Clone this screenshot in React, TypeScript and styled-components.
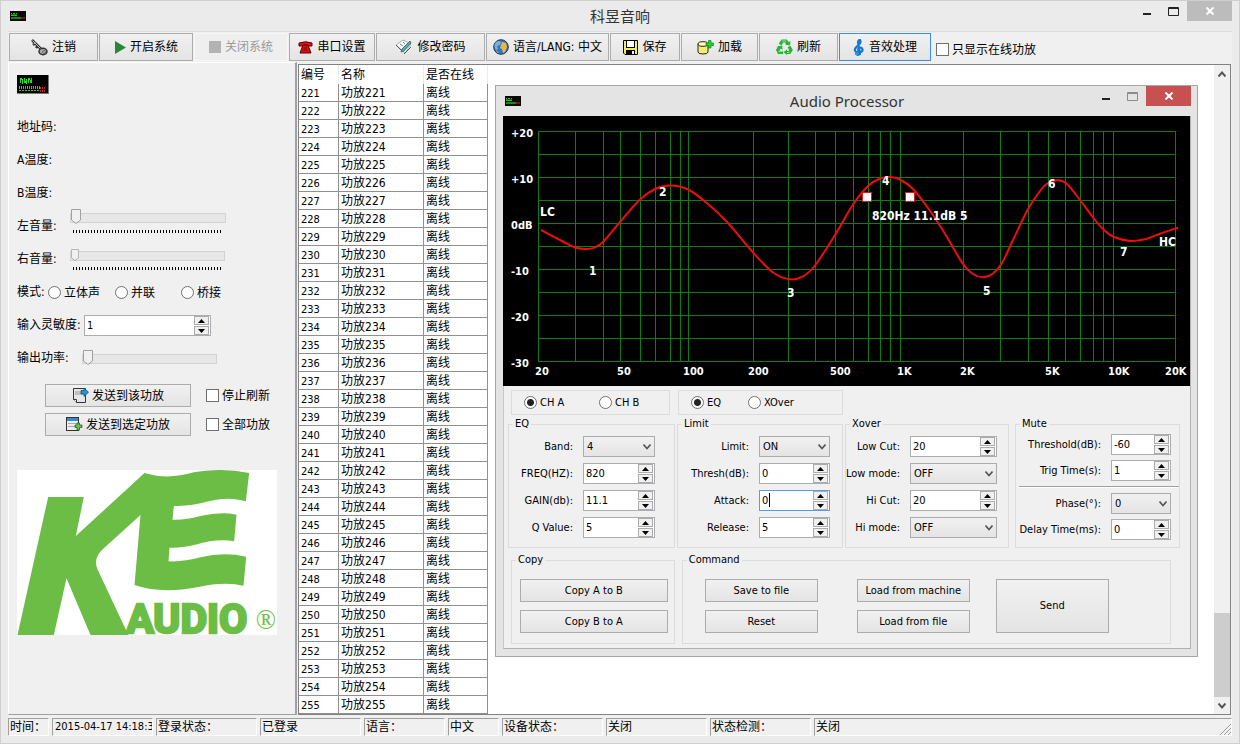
import React from 'react';
import styled, { createGlobalStyle, css } from 'styled-components';

const GlobalStyle = createGlobalStyle`
  * { box-sizing: border-box; }
  body { margin: 0; background: #ebebeb; }
  body, button, input, select, table {
    font-family: 'DejaVu Sans Condensed', 'Noto Sans CJK SC', sans-serif;
    font-size: 11px;
    color: #000;
  }
`;

/* ---------- shared controls ---------- */

const face = css`
  background: linear-gradient(#f1f1f1, #e4e4e4);
  border: 1px solid #acacac;
  border-radius: 0;
  padding: 0;
`;

const PushButton = styled.button<{ $tall?: boolean }>`
  ${face}
  height: ${p => (p.$tall ? 54 : 23)}px;
  display: flex;
  align-items: center;
  justify-content: center;
  gap: 3px;
  white-space: nowrap;
  line-height: 16px;
`;

const CheckLabel = styled.label`
  display: flex;
  align-items: center;
  gap: 3px;
  font-size: 12px;
  line-height: 16px;
  white-space: nowrap;
`;

const CheckBox = styled.input.attrs({ type: 'checkbox' })`
  appearance: none;
  margin: 0;
  width: 13px;
  height: 13px;
  border: 1px solid #707070;
  background: #fff;
`;

const RadioLabel = styled.label<{ $width?: number; $cjk?: boolean }>`
  display: flex;
  align-items: center;
  gap: 3px;
  width: ${p => (p.$width ? `${p.$width}px` : 'auto')};
  font-size: ${p => (p.$cjk ? 12 : 11)}px;
  line-height: 16px;
  white-space: nowrap;
`;

const RadioDot = styled.input.attrs({ type: 'radio' })`
  appearance: none;
  margin: 0;
  width: 13px;
  height: 13px;
  border: 1px solid #707070;
  border-radius: 50%;
  background: #fff;
  &:checked { background: radial-gradient(circle, #222 0 3px, #fff 4px); }
`;

const SpinBox = styled.div<{ $width: string; $active?: boolean }>`
  position: relative;
  display: flex;
  width: ${p => p.$width};
  height: 21px;
  border: 1px solid ${p => (p.$active ? '#569de5' : '#abadb3')};
  background: #fff;
`;

const SpinInput = styled.input`
  flex: 1;
  min-width: 0;
  border: 0;
  outline: 0;
  padding: 0 0 0 2px;
  background: transparent;
`;

const SpinArrows = styled.div`
  display: flex;
  flex-direction: column;
  justify-content: space-between;
  width: 15px;
  margin-right: 1px;
`;

const SpinArrow = styled.button`
  ${face}
  background: #f0f0f0;
  height: 9px;
  display: flex;
  align-items: center;
  justify-content: center;
`;

const Caret = styled.span`
  position: absolute;
  left: 9px;
  top: 2px;
  width: 1px;
  height: 14px;
  background: #000;
`;

const SelectBox = styled.div<{ $width: string }>`
  position: relative;
  width: ${p => p.$width};
  height: 21px;
  svg { position: absolute; right: 4px; top: 8px; pointer-events: none; }
`;

const SelectField = styled.select`
  ${face}
  appearance: none;
  display: block;
  width: 100%;
  height: 21px;
  padding: 0 2px 0 3px;
`;

function Spin({ id, value, width = '100%', active }: { id: string; value: string; width?: string; active?: boolean }) {
  return (
    <SpinBox $width={width} $active={active}>
      <SpinInput id={id} defaultValue={value} />
      {active && <Caret />}
      <SpinArrows>
        <SpinArrow aria-label="+"><svg width="7" height="4"><path d="M0 4L3.500 0L7 4z" /></svg></SpinArrow>
        <SpinArrow aria-label="-"><svg width="7" height="4"><path d="M0 0L3.500 4L7 0z" /></svg></SpinArrow>
      </SpinArrows>
    </SpinBox>
  );
}

function Select({ id, value, width = '100%' }: { id: string; value: string; width?: string }) {
  return (
    <SelectBox $width={width}>
      <SelectField id={id} defaultValue={value}><option>{value}</option></SelectField>
      <svg width="8" height="6"><path d="M0.500 0.500L4 4.500L7.500 0.500" fill="none" stroke="#555" strokeWidth="1.600" /></svg>
    </SelectBox>
  );
}

/* ---------- icons ---------- */

const AmpIcon = () => (
  <svg width="32" height="19" viewBox="0 0 32 19" shapeRendering="crispEdges">
    <rect width="32" height="19" fill="#777" />
    <rect width="31" height="18" fill="#000" />
    <path d="M3.500 3v5M5.500 4v5M7.500 3v5M9.500 4v5M11.500 3v5M14.500 3v5M13.500 5v3M4.500 3v2M8.500 6v2M12.500 3v2" stroke="#1fe01f" fill="none" />
    <path d="M2 12.500h21" stroke="#22d822" strokeWidth="3" strokeDasharray="1 1" />
    <path d="M2 15.500h21" stroke="#22d822" strokeDasharray="2 1" />
    <path d="M23 12.500h6M23 15.500h5" stroke="#d01a1a" strokeWidth="2" strokeDasharray="1 1" />
  </svg>
);

const AmpIconSmall = () => (
  <svg width="16" height="10" viewBox="0 0 16 10" shapeRendering="crispEdges">
    <rect width="16" height="10" fill="#0a0a0a" />
    <path d="M1 2.500h1M3 2.500h2M6 2.500h1M1 4.500h6" stroke="#2bbf2b" />
    <path d="M1 3.500h6" stroke="#145c14" />
    <path d="M1 7h10" stroke="#138a13" strokeWidth="2" />
    <path d="M11 7h4" stroke="#7a1010" strokeWidth="2" />
  </svg>
);

const KeyIcon = () => (
  <svg width="17" height="17" viewBox="0 0 17 17">
    <path d="M1 1l9 9M2 6l3-2.500M5 9l2.500-3" stroke="#333" strokeWidth="2.600" fill="none" />
    <path d="M1.500 1.500l9 9M2.500 5.200l2-1.500" stroke="#bbb" fill="none" />
    <ellipse cx="12" cy="12.500" rx="4" ry="3.200" fill="#aaa" stroke="#333" strokeWidth="1.500" />
    <circle cx="13" cy="13" r="1.300" fill="#fff" stroke="#333" strokeWidth=".8" />
  </svg>
);
const PlayIcon = () => <svg width="12" height="13"><path d="M1 0L12 6.500L1 13z" fill="#26893a" /></svg>;
const StopIcon = () => <svg width="12" height="12"><rect width="12" height="12" fill="#b3b3b3" /></svg>;
const PhoneIcon = () => (
  <svg width="15" height="13" viewBox="0 0 15 13">
    <path d="M1 5V2Q7.500-.5 14 2v3h-4V4H5v1z" fill="#e3101a" stroke="#5c0508" />
    <path d="M5 4h5l3 8H2z" fill="#d80c16" stroke="#5c0508" />
    <path d="M6 7h3M5.500 9h4" stroke="#7b0a0d" />
  </svg>
);
const EditIcon = () => (
  <svg width="18" height="16" viewBox="0 0 18 16">
    <path d="M1 6l7-5 8 4-6 9z" fill="#f5f8f8" stroke="#a9b0b2" />
    <path d="M1 6l6 6M9 15l7-7" stroke="#555" fill="none" />
    <path d="M15 2L7 10l-1 3 3-1 7-8z" fill="#58aaa2" stroke="#33615f" strokeWidth=".8" />
    <path d="M5 5l3 2M8 3l2 2" stroke="#888" />
  </svg>
);
const GlobeIcon = () => (
  <svg width="16" height="16" viewBox="0 0 16 16">
    <circle cx="8" cy="8" r="7.300" fill="#2d78c6" stroke="#263546" />
    <path d="M3 3q3-2 5 0l-1 3-3 1 1 3-2 1Q0 7 3 3z" fill="#7db0d8" />
    <path d="M9 3l4 1 1 4-2 5-2 1-1-4-2-1 1-3z" fill="#e8b843" />
    <path d="M3 11l3 3-2-.5z" fill="#e8b843" />
  </svg>
);
const SaveIcon = () => (
  <svg width="15" height="15" viewBox="0 0 15 15">
    <path d="M.5.5h14v14H2l-1.500-1.500z" fill="#f2ec5a" stroke="#000" />
    <rect x="3.500" y=".5" width="8" height="7" fill="#fff" stroke="#000" />
    <rect x="3" y="10" width="9" height="5" />
    <rect x="9" y="11" width="2" height="3" fill="#fff" />
  </svg>
);
const LoadIcon = () => (
  <svg width="17" height="15" viewBox="0 0 17 15">
    <path d="M1 4v8q0 2 5 2t5-2V4" fill="#f3ee72" stroke="#222" />
    <ellipse cx="6" cy="4" rx="5" ry="2.300" fill="#fffcc0" stroke="#222" />
    <path d="M9 3h2.500V.5h2.500V3h2.500v2.500H14V8h-2.500V5.500H9z" fill="#25cf2d" stroke="#11861a" strokeWidth=".7" />
  </svg>
);
const RecycleIcon = () => (
  <svg width="17" height="16" viewBox="0 0 17 16">
    <g fill="none" stroke="#27b535" strokeWidth="3.200">
      <path d="M4 5.500L6.500 2H10l2 3" />
      <path d="M13 7.500l2 3.500-1.500 2.500H10" />
      <path d="M7 13.500H3L1.800 11 4 7.500" />
    </g>
    <path d="M9 5.500l5 1 .5-4.500zM11 10.500v5.500l-3.500-2.700zM.5 8L6 6.500l.8 4z" fill="#27b535" />
    <path d="M6 2h4M2.500 12.500h4M11 13.500h2.500" stroke="#8eea90" />
  </svg>
);
const ClefIcon = () => (
  <svg width="12" height="17" viewBox="0 0 12 17">
    <path
      d="M7 15Q4.500 17 3 14.500M7 15L5 3Q5.500.8 7 1q1.200 2-.5 4L3 8.500Q.2 12 4 13q6 .8 5.500-2.500Q8.500 7.800 6 9q-1.800 1.700 0 2.500"
      fill="none" stroke="#1277cf" strokeWidth="2.200" strokeLinecap="round"
    />
    <circle cx="3.800" cy="14.500" r="1.800" fill="#1c9ae8" />
  </svg>
);
const SendIcon = () => (
  <svg width="17" height="17" viewBox="0 0 17 17">
    <path d="M1.500 1.500h12v14h-9l-3-3z" fill="#e6e6e6" stroke="#333" />
    <path d="M4 4v4M6 4v4M8 4v4M10 4v4" stroke="#999" />
    <path d="M1.500 12.500h3v3" fill="#fff" stroke="#333" />
    <path d="M9 3.500h3V1l4.500 4.200L12 9.500V7H9z" fill="#2196d3" stroke="#0e4c73" strokeWidth=".8" />
  </svg>
);
const SendSelectedIcon = () => (
  <svg width="17" height="15" viewBox="0 0 17 15">
    <rect x=".5" y=".5" width="12" height="13" fill="#eee" stroke="#333" />
    <rect x="1" y="1" width="11" height="3" fill="#2d8fd0" />
    <path d="M2 6.500h9M2 9.500h8" stroke="#aaa" />
    <path d="M9 8h2V6h2.500v2h2.500v2.500h-2.500V13H11v-2.500H9z" fill="#67c34f" stroke="#2d5c25" strokeWidth=".8" />
  </svg>
);

/* ---------- window frame ---------- */

const Shell = styled.div`
  min-height: 100vh;
  display: flex;
  flex-direction: column;
  background: #ebebeb;
  border: 1px solid #cfcfcf;
  padding: 0 7px 7px;
`;

const TitleBar = styled.header`
  display: grid;
  grid-template-columns: 1fr auto 1fr;
  height: 30px;
  line-height: 30px;
  font-family: 'Noto Sans', 'Noto Sans CJK SC', sans-serif;
  font-size: 15px;
  color: #333;
  > svg { align-self: center; margin-left: 2px; }
`;

const WindowButtons = styled.div`
  display: flex;
  justify-content: flex-end;
  align-items: flex-start;
`;

const WindowButton = styled.button<{ $close?: string }>`
  width: ${p => (p.$close ? 45 : 27)}px;
  height: 20px;
  padding: 0;
  border: 0;
  background: ${p => p.$close || 'transparent'};
  display: flex;
  align-items: center;
  justify-content: center;
`;

function Controls({ close, max }: { close: string; max: string }) {
  return (
    <WindowButtons>
      <WindowButton aria-label="Minimize"><svg width="10" height="10"><path d="M1 8h8" stroke="#222" strokeWidth="2" /></svg></WindowButton>
      <WindowButton aria-label="Maximize">
        <svg width="11" height="9"><path d="M.5 1.500h10M.5 .5h10v8H.5z" fill="none" stroke={max} /></svg>
      </WindowButton>
      <WindowButton aria-label="Close" $close={close}><svg width="8" height="8"><path d="M.5.5l7 7M7.500.5l-7 7" stroke="#fff" strokeWidth="2" /></svg></WindowButton>
    </WindowButtons>
  );
}

/* ---------- tool bar ---------- */

const Toolbar = styled.nav`
  display: flex;
  gap: 1px;
  height: 31px;
  padding: 1px 0 0 1px;
  background: #f0f0f0;
  border-top: 1px solid #dedede;
`;

const ToolButton = styled.button<{ $width: number; $flat?: boolean; $current?: boolean }>`
  ${face}
  width: ${p => p.$width}px;
  height: 28px;
  display: flex;
  align-items: center;
  justify-content: center;
  gap: 4px;
  font-size: 12px;
  line-height: 16px;
  white-space: nowrap;
  ${p => p.$flat && css`background: #efefef; border-color: #f6f6f6; color: #9a9a9a;`}
  ${p => p.$current && css`border-color: #3c8fe0;`}
`;

const ToolCheck = styled(CheckLabel)`
  margin: 4px 0 0 4px;
`;

const TOOLS = [
  { text: '注销', width: 89, icon: <KeyIcon /> },
  { text: '开启系统', width: 94, icon: <PlayIcon /> },
  { text: '关闭系统', width: 94, icon: <StopIcon />, flat: true },
  { text: '串口设置', width: 86, icon: <PhoneIcon /> },
  { text: '修改密码', width: 109, icon: <EditIcon /> },
  { text: '语言/LANG: 中文', width: 123, icon: <GlobeIcon /> },
  { text: '保存', width: 70, icon: <SaveIcon /> },
  { text: '加载', width: 77, icon: <LoadIcon /> },
  { text: '刷新', width: 79, icon: <RecycleIcon /> },
  { text: '音效处理', width: 92, icon: <ClefIcon />, current: true },
];

/* ---------- left panel ---------- */

const Main = styled.main`
  flex: 1;
  display: flex;
  background: #f0f0f0;
`;

const Side = styled.aside`
  flex: none;
  width: 289px;
  padding: 12px 0 0 8px;
  border: 1px solid #fff;
  border-right: 2px solid #a0a0a0;
  border-bottom-color: #a0a0a0;
  > svg { display: block; }
`;

const SideRows = styled.div`
  padding-top: 17px;
`;

const SideRow = styled.div<{ $top?: boolean }>`
  display: flex;
  align-items: ${p => (p.$top ? 'flex-start' : 'center')};
  height: 33px;
  font-size: 12px;
`;

const SideLabel = styled.label<{ $width?: number }>`
  min-width: ${p => p.$width || 0}px;
  line-height: 33px;
  white-space: nowrap;
`;

const SliderColumn = styled.div<{ $width: number; $gap: number }>`
  display: flex;
  flex-direction: column;
  gap: ${p => p.$gap}px;
  width: ${p => p.$width}px;
`;

const thumbImage = `url("data:image/svg+xml,${encodeURIComponent(
  '<svg xmlns="http://www.w3.org/2000/svg" viewBox="0 0 10 15" preserveAspectRatio="none"><path d="M.5.5h9v10.500L5 14.500.5 11z" fill="#f0f0f0" stroke="#a0a0a0"/></svg>',
)}")`;

const Slider = styled.input.attrs({ type: 'range' })<{ $small?: boolean }>`
  appearance: none;
  display: block;
  width: 100%;
  height: ${p => (p.$small ? 13 : 16)}px;
  margin: 0;
  background: transparent;
  &::-webkit-slider-runnable-track {
    height: 10px;
    border: 1px solid #d3d3d3;
    background: #e7e7e7;
  }
  &::-webkit-slider-thumb {
    appearance: none;
    width: ${p => (p.$small ? 8 : 10)}px;
    height: ${p => (p.$small ? 12 : 15)}px;
    margin-top: ${p => (p.$small ? -3 : -5)}px;
    background: ${thumbImage} 0 0 / 100% 100% no-repeat;
  }
`;

const Ticks = styled.div`
  height: 3px;
  margin: 0 3px;
  background: repeating-linear-gradient(90deg, #000 0 1px, transparent 1px 3px);
`;

const SideActions = styled.div`
  display: grid;
  grid-template-columns: 146px auto;
  gap: 6px 15px;
  padding: 9px 0 0 28px;
  ${PushButton} { font-size: 12px; }
`;

const LogoBox = styled.div`
  width: 260px;
  margin-top: 34px;
  background: #fff;
  svg { display: block; }
`;

const Logo = () => (
  <LogoBox>
    <svg width="260" height="165" viewBox="51 300 777 495" role="img" aria-label="KE Audio">
      <g fill="#6bbd45">
        <path d="M51 795L143 381H250L226 498L432 309C490 326 530 320 580 307Q660 292 746 309L736 394C690 380 650 386 600 400Q560 410 520 408L516 449Q560 450 600 438Q660 424 708 434L701 514Q650 504 590 523Q550 534 507 533L504 574Q550 576 600 562Q670 545 737 560L729 647Q670 634 590 652Q480 672 402 645L420 435L310 535Q275 565 292 600L368 762L384 795H270L198 625L160 795Z" />
        <text x="377" y="790" fontFamily="Roboto, 'Liberation Sans', sans-serif" fontWeight="700" fontSize="123" stroke="#6bbd45" strokeWidth="8">AUDIO</text>
        <text x="766" y="778" fontFamily="'Liberation Serif', serif" fontSize="80">®</text>
      </g>
    </svg>
  </LogoBox>
);

/* ---------- device list ---------- */

const ListPanel = styled.section`
  position: relative;
  flex: 1;
  display: flex;
  justify-content: space-between;
  align-items: stretch;
  margin: 2px 1px 0 1px;
  border: 1px solid #828282;
  background: #fff;
`;

const DeviceTable = styled.table`
  align-self: flex-start;
  border-collapse: separate;
  border-spacing: 0;
  table-layout: fixed;
  width: 189px;
  th, td {
    text-align: left;
    padding: 2px 0 0 2px;
    font-weight: 400;
    white-space: nowrap;
    overflow: hidden;
  }
  th {
    height: 19px;
    line-height: 17px;
    font-size: 12px;
    border-right: 1px solid #ececec;
  }
  td {
    height: 18px;
    line-height: 15px;
    border-right: 1px solid #909090;
    border-bottom: 1px solid #909090;
  }
  td + td { font-size: 12px; }
`;

const ScrollBar = styled.div`
  display: flex;
  flex-direction: column;
  width: 16px;
  background: #f0f0f0;
`;

const ScrollButton = styled.button`
  height: 17px;
  border: 0;
  padding: 0;
  background: #f0f0f0;
`;

const ScrollTrack = styled.div`
  flex: 1;
  display: flex;
  align-items: flex-end;
`;

const ScrollThumb = styled.div`
  width: 100%;
  height: 84px;
  background: #cdcdcd;
`;

const DEVICES = Array.from({ length: 35 }, (_, i) => 221 + i);

/* ---------- audio processor window ---------- */

const Dialog = styled.section`
  position: absolute;
  left: 196px;
  top: 20px;
  width: 703px;
  padding: 0 6px 7px 7px;
  background: #e4e4e4;
  border: 1px solid #a6a6a6;
`;

const DialogBody = styled.div`
  border: 1px solid #b0b0b0;
  border-top: 0;
  border-left-color: #c8c8c8;
  background: #f0f0f0;
`;

const Chart = styled.svg`
  display: block;
  margin-left: -1px;
  background: #000;
  text {
    font-family: 'DejaVu Sans Condensed', 'DejaVu Sans', sans-serif;
    font-size: 11px;
    font-weight: 700;
    fill: #fff;
  }
  .mark { font-size: 12px; }
`;

const ModeRow = styled.div`
  display: flex;
  gap: 8px;
  padding: 4px 0 0 7px;
`;

const ModeBox = styled.div<{ $width: number }>`
  display: flex;
  align-items: center;
  width: ${p => p.$width}px;
  height: 25px;
  padding-left: 12px;
  border: 1px solid #dcdcdc;
`;

const GroupRow = styled.div<{ $last?: boolean }>`
  display: flex;
  align-items: stretch;
  gap: ${p => (p.$last ? 7 : 2)}px;
  padding: ${p => (p.$last ? '4px 19px 4px 7px' : '1px 10px 0 4px')};
  > :last-child { margin-left: auto; }
`;

const Group = styled.fieldset<{ $width: number }>`
  width: ${p => p.$width}px;
  min-width: 0;
  margin: 0;
  padding: 0;
  border: 1px solid #dcdcdc;
  legend {
    margin-left: 4px;
    padding: 0 2px;
    line-height: 16px;
  }
`;

const Fields = styled.div<{ $labels: number; $control: number; $dense?: boolean }>`
  display: grid;
  grid-template-columns: ${p => p.$labels}px ${p => p.$control}px;
  justify-content: start;
  align-items: center;
  column-gap: 10px;
  row-gap: ${p => (p.$dense ? 5 : 6)}px;
  padding: ${p => (p.$dense ? '2px 0 7px' : '4px 0 9px')};
  > label { text-align: right; line-height: 16px; white-space: nowrap; }
  > hr {
    grid-column: 1 / -1;
    width: 160px;
    height: 2px;
    margin: 0 0 0 3px;
    border: 0;
    border-top: 1px solid #a0a0a0;
    border-bottom: 1px solid #fff;
  }
`;

const CopyButtons = styled.div`
  display: grid;
  gap: 8px;
  padding: 11px 6px 10px 8px;
`;

const CommandButtons = styled.div`
  display: grid;
  grid-template-columns: 126px 113px 113px;
  grid-auto-flow: column;
  grid-template-rows: auto auto;
  gap: 8px 26px;
  padding: 11px 0 10px 22px;
  > :nth-child(-n + 2) { width: 113px; }
  > :last-child { grid-row: 1 / 3; }
`;

const GRID_X = [35, 72, 100, 117, 137, 152, 167, 177, 185, 250, 285, 312, 332, 350, 365, 377, 387, 397, 460, 497, 525, 545, 562, 577, 590, 600, 610, 672];
const GRID_Y = Array.from({ length: 11 }, (_, i) => 15 + 23 * i);

const CURVE: [number, number][] = [
  [38, 114], [59, 125], [72, 131.5], [84, 133], [92, 131.3], [100, 126], [117, 106], [137, 83.5], [152, 73], [167, 69.5],
  [185, 73.5], [205, 88], [225, 107], [250, 136.5], [270, 156.5], [287, 163.3], [300, 160.3], [312, 149.5], [332, 119],
  [350, 88.5], [365, 70], [377, 62.5], [387, 61], [397, 63.5], [410, 73], [425, 92], [440, 114.5], [460, 148], [470, 158],
  [480, 161.3], [490, 157.5], [499, 147], [510, 124], [525, 93], [537, 75], [545, 67], [555, 64.3], [564, 68], [577, 84],
  [590, 101.5], [600, 113], [610, 120.5], [627, 125], [642, 123.3], [657, 117.7], [675, 111.7],
];

const AXIS: [number, number, string][] = [
  [8, 21, '+20'], [8, 67, '+10'], [8, 113, '0dB'], [8, 159, '-10'], [8, 205, '-20'], [8, 251, '-30'],
  [32, 259, '20'], [114, 259, '50'], [180, 259, '100'], [245, 259, '200'], [327, 259, '500'], [394, 259, '1K'],
  [457, 259, '2K'], [542, 259, '5K'], [605, 259, '10K'], [662, 259, '20K'],
];
const MARKS: [number, number, string][] = [
  [37, 100, 'LC'], [656, 130, 'HC'], [86, 159, '1'], [156, 80, '2'], [284, 181, '3'], [379, 69, '4'], [480, 179, '5'],
  [545, 72, '6'], [617, 140, '7'], [369, 104, '820Hz 11.1dB 5'],
];

// Smooth path through the points (Catmull-Rom converted to Bezier segments).
function smoothPath(pts: [number, number][]) {
  let d = `M${pts[0][0]} ${pts[0][1]}`;
  for (let i = 0; i < pts.length - 1; i++) {
    const a = pts[Math.max(i - 1, 0)];
    const b = pts[i];
    const c = pts[i + 1];
    const e = pts[Math.min(i + 2, pts.length - 1)];
    d += `C${b[0] + (c[0] - a[0]) / 6} ${b[1] + (c[1] - a[1]) / 6} ${c[0] - (e[0] - b[0]) / 6} ${c[1] - (e[1] - b[1]) / 6} ${c[0]} ${c[1]}`;
  }
  return d;
}

function ResponseChart() {
  return (
    <Chart width="687" height="270" viewBox="0 0 687 270">
      <g stroke="#0b7f12" shapeRendering="crispEdges">
        {GRID_X.map(x => <line key={x} x1={x + 0.5} x2={x + 0.5} y1="15" y2="246" />)}
        {GRID_Y.map(y => <line key={y} x1="35" x2="673" y1={y + 0.5} y2={y + 0.5} />)}
      </g>
      <path d={smoothPath(CURVE)} fill="none" stroke="#f00c0c" strokeWidth="2" />
      <rect x="359.500" y="76.500" width="9" height="9" fill="#fff" stroke="#e01818" />
      <rect x="402.500" y="76.500" width="9" height="9" fill="#fff" stroke="#e01818" />
      {AXIS.map(([x, y, text]) => <text key={text} x={x} y={y}>{text}</text>)}
      {MARKS.map(([x, y, text]) => <text key={text} className="mark" x={x} y={y}>{text}</text>)}
    </Chart>
  );
}

type Field = { id: string; label: string; value: string; kind: 'spin' | 'select'; active?: boolean };

const EQ: Field[] = [
  { id: 'band', label: 'Band:', value: '4', kind: 'select' },
  { id: 'freq', label: 'FREQ(HZ):', value: '820', kind: 'spin' },
  { id: 'gain', label: 'GAIN(db):', value: '11.1', kind: 'spin' },
  { id: 'q', label: 'Q Value:', value: '5', kind: 'spin' },
];
const LIMIT: Field[] = [
  { id: 'limit', label: 'Limit:', value: 'ON', kind: 'select' },
  { id: 'thresh', label: 'Thresh(dB):', value: '0', kind: 'spin' },
  { id: 'attack', label: 'Attack:', value: '0', kind: 'spin', active: true },
  { id: 'release', label: 'Release:', value: '5', kind: 'spin' },
];
const XOVER: Field[] = [
  { id: 'lowcut', label: 'Low Cut:', value: '20', kind: 'spin' },
  { id: 'lowmode', label: 'Low mode:', value: 'OFF', kind: 'select' },
  { id: 'hicut', label: 'Hi Cut:', value: '20', kind: 'spin' },
  { id: 'himode', label: 'Hi mode:', value: 'OFF', kind: 'select' },
];
const MUTE: Field[] = [
  { id: 'threshold', label: 'Threshold(dB):', value: '-60', kind: 'spin' },
  { id: 'trig', label: 'Trig Time(s):', value: '1', kind: 'spin' },
];
const DELAY: Field[] = [
  { id: 'phase', label: 'Phase(°):', value: '0', kind: 'select' },
  { id: 'delay', label: 'Delay Time(ms):', value: '0', kind: 'spin' },
];

const FieldRows = ({ fields }: { fields: Field[] }) => (
  <>
    {fields.map(f => (
      <React.Fragment key={f.id}>
        <label htmlFor={f.id}>{f.label}</label>
        {f.kind === 'spin' ? <Spin id={f.id} value={f.value} active={f.active} /> : <Select id={f.id} value={f.value} />}
      </React.Fragment>
    ))}
  </>
);

function AudioProcessor() {
  return (
    <Dialog aria-label="Audio Processor">
      <TitleBar>
        <AmpIconSmall />
        <span>Audio Processor</span>
        <Controls close="#c75050" max="#8c8c8c" />
      </TitleBar>
      <DialogBody>
        <ResponseChart />
        <ModeRow>
          <ModeBox $width={159}>
            <RadioLabel $width={75}><RadioDot name="channel" defaultChecked />CH A</RadioLabel>
            <RadioLabel><RadioDot name="channel" />CH B</RadioLabel>
          </ModeBox>
          <ModeBox $width={165}>
            <RadioLabel $width={57}><RadioDot name="view" defaultChecked />EQ</RadioLabel>
            <RadioLabel><RadioDot name="view" />XOver</RadioLabel>
          </ModeBox>
        </ModeRow>
        <GroupRow>
          <Group $width={167}>
            <legend>EQ</legend>
            <Fields $labels={64} $control={72}><FieldRows fields={EQ} /></Fields>
          </Group>
          <Group $width={166}>
            <legend>Limit</legend>
            <Fields $labels={71} $control={71}><FieldRows fields={LIMIT} /></Fields>
          </Group>
          <Group $width={164}>
            <legend>Xover</legend>
            <Fields $labels={54} $control={87}><FieldRows fields={XOVER} /></Fields>
          </Group>
          <Group $width={165}>
            <legend>Mute</legend>
            <Fields $labels={85} $control={60} $dense>
              <FieldRows fields={MUTE} />
              <hr />
              <FieldRows fields={DELAY} />
            </Fields>
          </Group>
        </GroupRow>
        <GroupRow $last>
          <Group $width={164}>
            <legend>Copy</legend>
            <CopyButtons>
              <PushButton>Copy A to B</PushButton>
              <PushButton>Copy B to A</PushButton>
            </CopyButtons>
          </Group>
          <Group $width={490}>
            <legend>Command</legend>
            <CommandButtons>
              <PushButton>Save to file</PushButton>
              <PushButton>Reset</PushButton>
              <PushButton>Load from machine</PushButton>
              <PushButton>Load from file</PushButton>
              <PushButton $tall>Send</PushButton>
            </CommandButtons>
          </Group>
        </GroupRow>
      </DialogBody>
    </Dialog>
  );
}

/* ---------- status bar ---------- */

const StatusBar = styled.footer`
  display: flex;
  gap: 3px;
  padding-top: 3px;
  background: #f0f0f0;
`;

const StatusCell = styled.span<{ $width?: number }>`
  ${p => (p.$width ? `width: ${p.$width}px;` : 'flex: 1;')}
  display: flex;
  justify-content: space-between;
  align-items: flex-end;
  height: 18px;
  padding-left: 1px;
  border: 1px solid #a0a0a0;
  border-right-color: #fff;
  border-bottom-color: #fff;
  font-size: 12px;
  line-height: 16px;
  white-space: nowrap;
  overflow: hidden;
`;

const Clock = styled.time`
  padding-left: 1px;
  font-size: 11px;
`;

export default function App() {
  return (
    <Shell>
      <GlobalStyle />
      <TitleBar>
        <AmpIconSmall />
        <span>科昱音响</span>
        <Controls close="#bcbcbc" max="#222" />
      </TitleBar>
      <Toolbar>
        {TOOLS.map(t => (
          <ToolButton key={t.text} $width={t.width} $flat={t.flat} $current={t.current} disabled={t.flat}>
            {t.icon}
            {t.text}
          </ToolButton>
        ))}
        <ToolCheck><CheckBox />只显示在线功放</ToolCheck>
      </Toolbar>
      <Main>
        <Side>
          <AmpIcon />
          <SideRows>
            <SideRow><SideLabel>地址码:</SideLabel></SideRow>
            <SideRow><SideLabel>A温度:</SideLabel></SideRow>
            <SideRow><SideLabel>B温度:</SideLabel></SideRow>
            <SideRow $top>
              <SideLabel htmlFor="left" $width={53}>左音量:</SideLabel>
              <SliderColumn $width={156} $gap={4}><Slider id="left" defaultValue={0} /><Ticks /></SliderColumn>
            </SideRow>
            <SideRow>
              <SideLabel htmlFor="right" $width={53}>右音量:</SideLabel>
              <SliderColumn $width={155} $gap={4}><Slider id="right" defaultValue={0} $small /><Ticks /></SliderColumn>
            </SideRow>
            <SideRow>
              <SideLabel as="span" $width={31}>模式:</SideLabel>
              <RadioLabel $cjk $width={67}><RadioDot name="mode" />立体声</RadioLabel>
              <RadioLabel $cjk $width={66}><RadioDot name="mode" />并联</RadioLabel>
              <RadioLabel $cjk><RadioDot name="mode" />桥接</RadioLabel>
            </SideRow>
            <SideRow>
              <SideLabel htmlFor="sens" $width={67}>输入灵敏度:</SideLabel>
              <Spin id="sens" value="1" width="127px" />
            </SideRow>
            <SideRow>
              <SideLabel htmlFor="power" $width={65}>输出功率:</SideLabel>
              <SliderColumn $width={135} $gap={0}><Slider id="power" defaultValue={0} /></SliderColumn>
            </SideRow>
          </SideRows>
          <SideActions>
            <PushButton><SendIcon />发送到该功放</PushButton>
            <CheckLabel><CheckBox />停止刷新</CheckLabel>
            <PushButton><SendSelectedIcon />发送到选定功放</PushButton>
            <CheckLabel><CheckBox />全部功放</CheckLabel>
          </SideActions>
          <Logo />
        </Side>
        <ListPanel>
          <DeviceTable>
            <colgroup><col width="40" /><col width="85" /><col width="64" /></colgroup>
            <thead><tr><th>编号</th><th>名称</th><th>是否在线</th></tr></thead>
            <tbody>
              {DEVICES.map(n => (
                <tr key={n}><td>{n}</td><td>功放{n}</td><td>离线</td></tr>
              ))}
            </tbody>
          </DeviceTable>
          <ScrollBar>
            <ScrollButton aria-label="Up"><svg width="8" height="6"><path d="M.5 5.500L4 1.500L7.500 5.500" fill="none" stroke="#555" strokeWidth="2" /></svg></ScrollButton>
            <ScrollTrack><ScrollThumb /></ScrollTrack>
            <ScrollButton aria-label="Down"><svg width="8" height="6"><path d="M.5 .5L4 4.500L7.500 .5" fill="none" stroke="#555" strokeWidth="2" /></svg></ScrollButton>
          </ScrollBar>
          <AudioProcessor />
        </ListPanel>
      </Main>
      <StatusBar>
        <StatusCell $width={41}>时间：</StatusCell>
        <StatusCell $width={101}><Clock>2015-04-17 14:18:3</Clock></StatusCell>
        <StatusCell $width={101}>登录状态：</StatusCell>
        <StatusCell $width={101}>已登录</StatusCell>
        <StatusCell $width={81}>语言：</StatusCell>
        <StatusCell $width={51}>中文</StatusCell>
        <StatusCell $width={101}>设备状态：</StatusCell>
        <StatusCell $width={101}>关闭</StatusCell>
        <StatusCell $width={101}>状态检测：</StatusCell>
        <StatusCell>
          关闭
          <svg width="12" height="12"><path d="M1 12L12 1M5 12L12 5M9 12L12 9" stroke="#a0a0a0" /></svg>
        </StatusCell>
      </StatusBar>
    </Shell>
  );
}
